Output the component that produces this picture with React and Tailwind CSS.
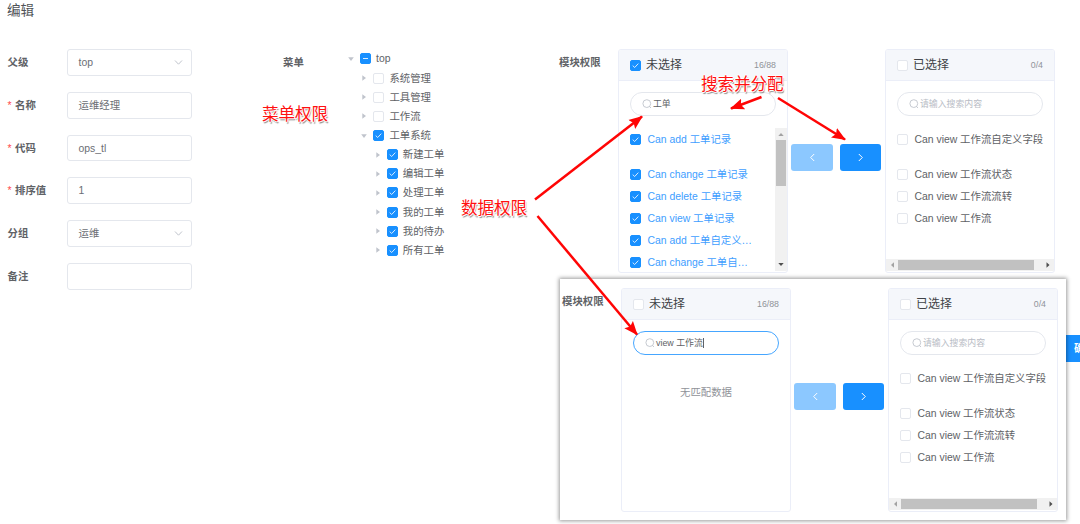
import clsx from "clsx";

const menuTree = [
    { label: "top", level: 0, open: true, state: "partial" },
    { label: "系统管理", level: 1 },
    { label: "工具管理", level: 1 },
    { label: "工作流", level: 1 },
    { label: "工单系统", level: 1, open: true, state: "checked" },
    { label: "新建工单", level: 2, state: "checked" },
    { label: "编辑工单", level: 2, state: "checked" },
    { label: "处理工单", level: 2, state: "checked" },
    { label: "我的工单", level: 2, state: "checked" },
    { label: "我的待办", level: 2, state: "checked" },
    { label: "所有工单", level: 2, state: "checked" },
];

const indents = ["pl-0", "pl-[13.4px]", "pl-[26.8px]"];

const sourceItems = [
    "Can add 工单记录",
    "Can change 工单记录",
    "Can delete 工单记录",
    "Can view 工单记录",
    "Can add 工单自定义…",
    "Can change 工单自…",
];

const targetItems = [
    "Can view 工作流自定义字段",
    "Can view 工作流状态",
    "Can view 工作流流转",
    "Can view 工作流",
];

function Checkbox({ state }) {
    return (
        <span
            className={clsx(
                "flex size-[11px] shrink-0 items-center justify-center rounded-[2px] border",
                state ? "border-[#1890ff] bg-[#1890ff]" : "border-[#e4e7ed] bg-white"
            )}
        >
            {state && (
                <svg className="size-[9px] shrink-0" viewBox="0 0 9 9" fill="none" stroke="#d9edff" strokeWidth="1">
                    <path d={state === "partial" ? "M2 4.5h5" : "M1.7 4.6l2 1.9 3.6-3.9"} />
                </svg>
            )}
        </span>
    );
}

function Field({ label, value, required, select }) {
    return (
        <div className="flex h-[26.7px] items-center">
            <label className="w-[59px] shrink-0 pt-px font-bold">
                {required && <span className="mr-[3.5px] font-normal text-[#ff4949]">*</span>}
                {label}
            </label>
            <div className="flex h-full w-[125.5px] items-center justify-between rounded-[3px] border border-[#e4e7ed] pr-2 pl-[11px] text-[#6b6e74]">
                <span className="pt-px">{value}</span>
                {select && (
                    <svg className="size-[9px]" viewBox="0 0 9 9" fill="none" stroke="#c0c4cc">
                        <path d="M1 2.5l3.5 3.7L8 2.5" />
                    </svg>
                )}
            </div>
        </div>
    );
}

function TreeRow({ node }) {
    return (
        <li className={clsx("flex h-[19.15px] items-center", indents[node.level])}>
            <svg className="mr-[6px] size-[6px]" viewBox="0 0 6 6" fill="#c0c4cc">
                <path d={node.open ? "M0.2 1.3h5.6L3 5z" : "M1.3 0.2v5.6L5 3z"} />
            </svg>
            <Checkbox state={node.state} />
            <span className="ml-[5px] pt-px">{node.label}</span>
        </li>
    );
}

function SearchBox({ value, focused }) {
    return (
        <div
            className={clsx(
                "mx-[11px] mt-[11px] flex h-6 items-center rounded-full border pl-[11px] text-[8.9px]",
                focused ? "border-[#1890ff]/80" : "border-[#e4e7ed]"
            )}
        >
            <svg className="mr-px size-[10px]" viewBox="0 0 10 10" fill="none" stroke="#c0c4cc" strokeWidth="0.9">
                <circle cx="4.8" cy="4.6" r="3.9" />
                <path d="M7.3 7.3L9 9" />
            </svg>
            {value ? <span>{value}</span> : <span className="text-[#b8bcc5]">请输入搜索内容</span>}
            {focused && <span className="h-[10px] w-px bg-[#606266]" />}
        </div>
    );
}

function VerticalScrollbar() {
    return (
        <div className="flex w-[12.5px] shrink-0 flex-col items-center bg-[#f1f1f1]">
            <svg className="h-3 w-3" viewBox="0 0 12 12" fill="#a3a3a3">
                <path d="M3.3 8L6 5l2.7 3z" />
            </svg>
            <span className="h-[46px] w-[10px] bg-[#c1c1c1]" />
            <span className="flex-1" />
            <svg className="h-3 w-3" viewBox="0 0 12 12" fill="#505050">
                <path d="M3.3 4L6 7l2.7-3z" />
            </svg>
        </div>
    );
}

function HorizontalScrollbar() {
    return (
        <div className="flex h-3 items-center bg-[#f1f1f1]">
            <svg className="h-3 w-3" viewBox="0 0 12 12" fill="#a3a3a3">
                <path d="M8 3.3L5 6l3 2.7z" />
            </svg>
            <span className="h-[10px] w-[136px] bg-[#c1c1c1]" />
            <span className="flex-1" />
            <svg className="h-3 w-3" viewBox="0 0 12 12" fill="#505050">
                <path d="M4.5 3.3L7.5 6l-3 2.7z" />
            </svg>
        </div>
    );
}

function Panel({ title, count, headState, search, focused, items = [], itemState, scroll }) {
    return (
        <section className="flex h-[223.5px] w-[170px] shrink-0 flex-col overflow-hidden rounded-[3px] border border-[#ebeef8] bg-white pb-px">
            <header className="flex h-[31px] shrink-0 items-center border-b border-[#ebeef8] bg-[#f5f7fb] px-[11px]">
                <Checkbox state={headState} />
                <span className="ml-[5px] text-xs leading-none text-[#404247]">{title}</span>
                <span className="ml-auto text-[8.8px] text-[#909399]">{count}</span>
            </header>
            <SearchBox value={search} focused={focused} />
            <div className="mt-[11.8px] flex min-h-0 flex-1">
                {items.length > 0 ? (
                    <ul className="min-w-0 flex-1 overflow-hidden">
                        {items.map((item, i) => (
                            <li
                                key={item}
                                className={clsx(
                                    "flex h-[22.1px] items-center pl-[11px] whitespace-nowrap",
                                    i === 0 && "mb-[13.1px]",
                                    itemState ? "text-[#409eff]" : "text-[#606266]"
                                )}
                            >
                                <Checkbox state={itemState} />
                                <span className="ml-[6.5px] pt-px">{item}</span>
                            </li>
                        ))}
                    </ul>
                ) : (
                    <p className="mt-[17.5px] flex-1 text-center leading-4 text-[#909399]">无匹配数据</p>
                )}
                {scroll === "y" && <VerticalScrollbar />}
            </div>
            {scroll === "x" && <HorizontalScrollbar />}
        </section>
    );
}

function MoveButton({ direction }) {
    const left = direction === "left";
    return (
        <button
            type="button"
            className={clsx(
                "flex h-[27px] w-[41.5px] items-center justify-center rounded-[3px]",
                left ? "bg-[#8cc8ff]" : "bg-[#1890ff]"
            )}
        >
            <svg className="size-[9px]" viewBox="0 0 9 9" fill="none" stroke="#fff">
                <path d={left ? "M6.2 1L2.7 4.5 6.2 8" : "M2.8 1l3.5 3.5L2.8 8"} />
            </svg>
        </button>
    );
}

function Transfer({ source }) {
    return (
        <div className="flex">
            <label className="mt-[5.5px] h-4 w-[59px] shrink-0 leading-4 font-bold">模块权限</label>
            <Panel title="未选择" count="16/88" {...source} />
            <div className="mt-[94.6px] flex w-[97px] gap-[7px] pl-[3.3px]">
                <MoveButton direction="left" />
                <MoveButton direction="right" />
            </div>
            <Panel title="已选择" count="0/4" items={targetItems} scroll="x" />
        </div>
    );
}

function Note({ className, children }) {
    return (
        <span
            className={clsx(
                "absolute text-[16.5px] leading-5 whitespace-nowrap text-[#ff1010] [text-shadow:1px_0_#fff,-1px_0_#fff,0_1px_#fff,0_-1px_#fff,1px_2px_1px_#888]",
                className
            )}
        >
            {children}
        </span>
    );
}

function Arrows() {
    return (
        <svg className="absolute inset-0 h-[524px] w-[1080px]" fill="none" stroke="#ff0505" strokeWidth="2.5">
            <defs>
                <marker id="head" markerUnits="userSpaceOnUse" markerWidth="15" markerHeight="12" refX="13" refY="6" orient="auto">
                    <path d="M0 0.4L14 6 0 11.6 2.5 6z" fill="#ff0505" stroke="none" />
                </marker>
            </defs>
            <path d="M535 199.5L642 116.5" markerEnd="url(#head)" />
            <path d="M537.5 216L637 334.5" markerEnd="url(#head)" />
            <path d="M761.5 97L731 108.5" markerEnd="url(#head)" />
            <path d="M778 98L845 139.5" markerEnd="url(#head)" />
        </svg>
    );
}

export default function App() {
    return (
        <div className="relative h-[524px] w-[1080px] overflow-hidden bg-white font-['Liberation_Sans','Noto_Sans_CJK_SC',sans-serif] text-[10.4px] leading-4 text-[#606266]">
            <h1 className="h-[49.4px] pt-[1px] pl-[7px] text-[13.6px] leading-5 text-[#505358]">编辑</h1>

            <main className="flex items-start">
                <form className="flex w-[276px] shrink-0 flex-col gap-4 pl-[7.5px]">
                    <Field label="父级" value="top" select />
                    <Field label="名称" value="运维经理" required />
                    <Field label="代码" value="ops_tl" required />
                    <Field label="排序值" value="1" required />
                    <Field label="分组" value="运维" select />
                    <Field label="备注" value="" />
                </form>

                <div className="flex w-[283px] shrink-0 pl-[7px]">
                    <label className="mt-[5.5px] w-[65px] shrink-0 font-bold">菜单</label>
                    <ul>
                        {menuTree.map((node) => (
                            <TreeRow key={node.label} node={node} />
                        ))}
                    </ul>
                </div>

                <Transfer source={{ headState: "checked", search: "工单", items: sourceItems, itemState: "checked", scroll: "y" }} />
            </main>

            {/* Confirm button, partly behind the floating window */}
            <button type="button" className="absolute top-[335px] left-[1055px] h-[27px] w-[42px] bg-[#1890ff] pl-[19px] text-left font-bold whitespace-nowrap text-white">
                确定
            </button>

            {/* Floating window with the second search state */}
            <div className="absolute top-[279px] left-[560px] h-[241px] w-[506px] bg-white pt-[9.4px] pl-[2px] shadow-[0_0_4px_1px_rgba(0,0,0,0.4)]">
                <Transfer source={{ search: "view 工作流", focused: true }} />
            </div>

            <Note className="top-[104px] left-[262px]">菜单权限</Note>
            <Note className="top-[198px] left-[461px]">数据权限</Note>
            <Note className="top-[74px] left-[701px]">搜索并分配</Note>
            <Arrows />
        </div>
    );
}
